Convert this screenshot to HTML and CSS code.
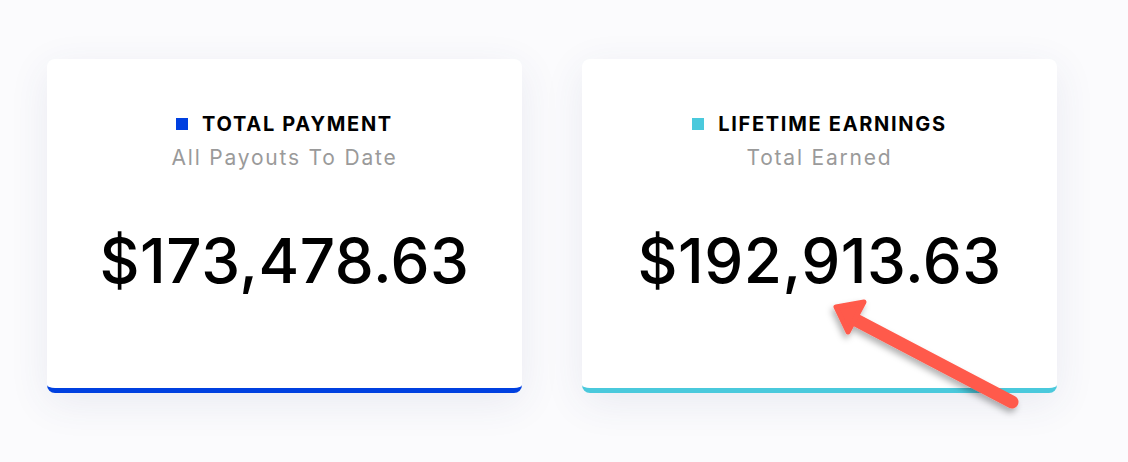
FILE: index.html
```html
<!DOCTYPE html>
<html lang="en">

<head>
    <meta charset="UTF-8">
    <meta name="viewport" content="width=device-width, initial-scale=1.0">
    <title>Earnings</title>
    <link rel="stylesheet" href="styles.css">
</head>

<body>
    <div class="cards">
        <div class="card blue">
            <div class="title"><span class="dot"></span>TOTAL PAYMENT</div>
            <div class="subtitle">All Payouts To Date</div>
            <div class="amount">$173,478.63</div>
        </div>
        <div class="card cyan">
            <div class="title"><span class="dot"></span>LIFETIME EARNINGS</div>
            <div class="subtitle">Total Earned</div>
            <div class="amount">$192,913.63</div>
        </div>
    </div>

    <svg class="arrow" width="1128" height="462" viewBox="0 0 1128 462">
        <defs>
            <filter id="shade" x="-20%" y="-20%" width="140%" height="140%">
                <feDropShadow dx="-2" dy="4" stdDeviation="3" flood-color="#000" flood-opacity="0.3"/>
            </filter>
        </defs>
        <g filter="url(#shade)" fill="#ff5a4c" stroke="#ff5a4c" stroke-linecap="round" stroke-linejoin="round">
            <line x1="1012" y1="402" x2="852" y2="318" stroke-width="13"/>
            <polygon points="836,307 864,302 848,332" stroke-width="5"/>
        </g>
    </svg>
</body>

</html>
```

FILE: styles.css
```css
* {
    box-sizing: border-box;
}

body {
    margin: 0;
    padding: 59px 0 0 47px;
    height: 100vh;
    background: #fbfbfd;
    font-family: Inter, "Noto Sans", sans-serif;
    overflow: hidden;
    position: relative;
}

.cards {
    display: flex;
    gap: 60px;
}

.card {
    width: 475px;
    height: 334px;
    background: #fff;
    border-radius: 8px;
    border-bottom: 5px solid;
    box-shadow: 0 10px 40px rgba(60, 70, 120, 0.09);
    display: flex;
    flex-direction: column;
    align-items: center;
    padding-top: 53px;
}

.card.blue {
    border-bottom-color: #0040e0;
}

.card.cyan {
    border-bottom-color: #4ac9dc;
}

.title {
    display: flex;
    align-items: center;
    gap: 14px;
    font-size: 20px;
    font-weight: 700;
    color: #000;
    letter-spacing: 1.7px;
}

.dot {
    width: 12px;
    height: 12px;
}

.blue .dot {
    background: #0040e0;
}

.cyan .dot {
    background: #4ac9dc;
}

.subtitle {
    margin-top: 9px;
    font-size: 21px;
    color: #9a9a9a;
    letter-spacing: 1.8px;
}

.amount {
    margin-top: 53px;
    font-size: 62px;
    font-weight: 500;
    color: #000;
    letter-spacing: 0.5px;
}

.arrow {
    position: absolute;
    top: 0;
    left: 0;
}
```
